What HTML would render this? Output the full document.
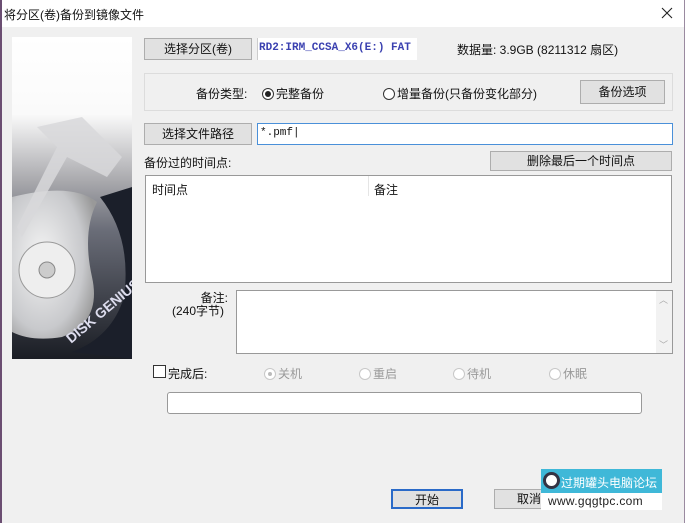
<!DOCTYPE html>
<html><head><meta charset="utf-8"><style>
*{box-sizing:border-box;margin:0;padding:0}
body{width:685px;height:523px;overflow:hidden;background:#f0f0f0;font-family:"Liberation Sans","Noto Sans CJK SC",sans-serif;font-size:12px;color:#111;position:relative}
.a{position:absolute;white-space:nowrap}
.btn{position:absolute;background:#e1e1e1;border:1px solid #adadad;text-align:center;font-size:12px}
.inp{position:absolute;background:#fff;border:1px solid #a0a0a0}
.rad{display:inline-block;width:12px;height:12px;border:1px solid #333;border-radius:50%;background:#fff;vertical-align:-2px;margin-right:2px;position:relative}
.gr{color:#9a9a9a}
.gr .rad{border-color:#c8c8c8}
</style></head><body>
<div class="a" style="left:0;top:0;width:685px;height:523px;border-left:2px solid #6b4e72;border-right:1px solid #9a8aa0"></div>
<div class="a" style="left:2px;top:0;width:682px;height:27px;background:#fff"></div>
<div class="a" style="left:4px;top:6px;font-size:12px">将分区(卷)备份到镜像文件</div>
<svg class="a" style="left:661px;top:7px" width="12" height="12"><path d="M1 1L11 11M11 1L1 11" stroke="#222" stroke-width="1.1"/></svg>

<svg class="a" style="left:12px;top:37px" width="120" height="322" viewBox="0 0 120 322">
<defs>
<linearGradient id="bg" x1="0" y1="0" x2="0" y2="1"><stop offset="0" stop-color="#fff"/><stop offset="0.24" stop-color="#fafafa"/><stop offset="0.45" stop-color="#a8a8ac"/><stop offset="0.6" stop-color="#6a6d78"/><stop offset="1" stop-color="#1a1d24"/></linearGradient>
<radialGradient id="pl" cx="0.35" cy="0.45" r="0.7"><stop offset="0" stop-color="#f4f4f4"/><stop offset="0.7" stop-color="#c8c9cc"/><stop offset="1" stop-color="#999"/></radialGradient>
</defs>
<rect width="120" height="322" fill="url(#bg)"/>
<path d="M0 160 Q60 145 85 165 Q70 195 80 240 Q90 285 50 300 Q20 305 0 295Z" fill="url(#pl)"/>
<path d="M88 160 Q120 200 112 260 Q100 300 60 315 L120 322 L120 150Z" fill="#1b1f2a"/>
<path d="M25 90 L70 80 L110 120 L95 140 L55 120 L10 200 L5 190 L45 110Z" fill="#d8d8da" opacity="0.85"/>
<circle cx="35" cy="233" r="28" fill="#eee" stroke="#999"/>
<circle cx="35" cy="233" r="8" fill="#ccc" stroke="#888"/>
<text x="42" y="300" transform="rotate(-40 60 280)" font-family="Liberation Sans" font-weight="bold" font-size="14" fill="#dde">DISK GENIUS</text>
</svg>

<div class="btn" style="left:144px;top:38px;width:108px;height:22px;line-height:20px">选择分区(卷)</div>
<div class="a" style="left:257px;top:38px;width:160px;height:22px;background:#fff;border-left:1px solid #ccc"></div>
<div class="a" style="left:259px;top:42px;color:#3a40b0;font-family:'Liberation Mono',monospace;font-size:11px;font-weight:bold;width:157px;overflow:hidden">RD2:IRM_CCSA_X6(E:) FAT</div>
<div class="a" style="left:457px;top:41px">数据量: 3.9GB (8211312 扇区)</div>

<div class="a" style="left:144px;top:73px;width:529px;height:38px;border:1px solid #dcdcdc"></div>
<div class="a" style="left:196px;top:85px">备份类型:</div>
<div class="a" style="left:262px;top:85px"><span class="rad"><span style="position:absolute;left:2px;top:2px;width:6px;height:6px;border-radius:50%;background:#222"></span></span>完整备份</div>
<div class="a" style="left:383px;top:85px"><span class="rad"></span>增量备份(只备份变化部分)</div>
<div class="btn" style="left:580px;top:80px;width:85px;height:24px;line-height:22px">备份选项</div>

<div class="btn" style="left:144px;top:123px;width:108px;height:22px;line-height:20px">选择文件路径</div>
<div class="inp" style="left:257px;top:123px;width:416px;height:22px;border-color:#4a90d9"></div>
<div class="a" style="left:260px;top:127px;font-family:'Liberation Mono',monospace;font-size:11px">*.pmf|</div>

<div class="a" style="left:144px;top:154px">备份过的时间点:</div>
<div class="btn" style="left:490px;top:151px;width:182px;height:20px;line-height:18px">删除最后一个时间点</div>

<div class="inp" style="left:145px;top:175px;width:527px;height:108px;border-color:#999"></div>
<div class="a" style="left:368px;top:176px;width:1px;height:20px;background:#e5e5e5"></div>
<div class="a" style="left:152px;top:181px">时间点</div>
<div class="a" style="left:374px;top:181px">备注</div>

<div class="a" style="left:200px;top:292px;width:28px;text-align:right;line-height:12px">备注:</div>
<div class="a" style="left:172px;top:305px;line-height:12px">(240字节)</div>
<div class="inp" style="left:236px;top:290px;width:437px;height:64px;border-color:#999"></div>
<div class="a" style="left:656px;top:291px;width:16px;height:62px;background:#f2f2f2"></div>
<div class="a" style="left:659px;top:293px;font-size:9px;color:#aaa">︿</div>
<div class="a" style="left:659px;top:338px;font-size:9px;color:#aaa">﹀</div>

<div class="a" style="left:153px;top:365px;width:13px;height:13px;border:1px solid #333;background:#fff"></div>
<div class="a" style="left:168px;top:365px">完成后:</div>
<div class="a gr" style="left:264px;top:365px"><span class="rad"><span style="position:absolute;left:3px;top:3px;width:4px;height:4px;border-radius:50%;background:#bbb"></span></span>关机</div>
<div class="a gr" style="left:359px;top:365px"><span class="rad"></span>重启</div>
<div class="a gr" style="left:453px;top:365px"><span class="rad"></span>待机</div>
<div class="a gr" style="left:549px;top:365px"><span class="rad"></span>休眠</div>

<div class="a" style="left:167px;top:392px;width:475px;height:22px;background:#fff;border:1px solid #999;border-radius:3px"></div>

<div class="btn" style="left:391px;top:489px;width:72px;height:20px;line-height:18px;border:2px solid #2a6ac8">开始</div>
<div class="btn" style="left:494px;top:489px;width:72px;height:20px;line-height:18px;text-align:left;padding-left:22px">取消</div>

<div class="a" style="left:541px;top:469px;width:121px;height:24px;background:#3fb8d8"></div>
<div class="a" style="left:543px;top:472px;width:17px;height:17px;border-radius:50%;background:#fff;border:3px solid #334"></div>
<div class="a" style="left:561px;top:474px;color:#fff;font-size:12px">过期罐头电脑论坛</div>
<div class="a" style="left:541px;top:493px;width:121px;height:17px;background:#fff"></div>
<div class="a" style="left:548px;top:494px;color:#222;font-size:12px;letter-spacing:0.3px">www.gqgtpc.com</div>
</body></html>
